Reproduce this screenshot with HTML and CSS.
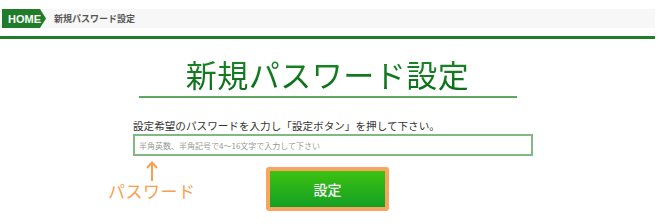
FILE: index.html
```html
<!DOCTYPE html>
<html lang="ja">
<head>
<meta charset="utf-8">
<link rel="stylesheet" href="styles.css">
</head>
<body>
<div class="page">
  <div class="crumb">
    <span class="home">HOME</span>
    <span class="crumb-text">新規パスワード設定</span>
  </div>
  <div class="rule"></div>
  <h1 class="title">新規パスワード設定</h1>
  <div class="title-line"></div>
  <div class="form">
    <p class="lead">設定希望のパスワードを入力し「設定ボタン」を押して下さい。</p>
    <div class="input">半角英数、半角記号で4～16文字で入力して下さい</div>
  </div>
  <div class="actions">
    <div class="note">
      <svg class="arrow" width="12" height="20" viewBox="0 0 12 20"><path d="M6 2 V20 M1 7 L6 1.5 L11 7" fill="none" stroke="#f7a050" stroke-width="2"/></svg>
      <span class="note-text">パスワード</span>
    </div>
    <div class="btn-wrap"><button class="btn">設定</button></div>
  </div>
</div>
</body>
</html>
```
FILE: styles.css
```css
* { box-sizing: border-box; }
html, body { margin: 0; padding: 0; background: #fff; }
body { font-family: "Noto Sans CJK JP", "Noto Sans", sans-serif; }
.page { width: 655px; padding-top: 9px; position: relative; }
.crumb {
  display: flex; align-items: center; height: 19px;
  background: #f7f7f7;
}
.home {
  height: 19px; width: 44px; margin-left: 2px;
  background: #1f7d2a; color: #fff;
  font-family: "Liberation Sans", Arial, sans-serif; font-weight: bold; font-size: 11px;
  display: flex; align-items: center; padding-left: 6px;
  clip-path: polygon(0 0, 38px 0, 44px 50%, 38px 100%, 0 100%);
}
.crumb-text { margin-left: 8px; font-size: 9px; color: #555; font-weight: bold; }
.rule { height: 3px; background: #1f7d2a; margin-top: 8px; }
.title {
  margin: 15px 0 0; text-align: center;
  font-size: 31px; line-height: 40px; font-weight: normal; letter-spacing: 0.5px;
  background: linear-gradient(#1d8a2a, #0a6a16);
  -webkit-background-clip: text; background-clip: text; color: transparent;
}
.title-line { height: 2px; width: 378px; margin: 2px 0 0 139px; background: #5fa862; }
.form { margin-left: 133px; margin-top: 21px; }
.lead { margin: 0; font-size: 10.6px; line-height: 14px; color: #333; }
.input {
  margin-top: 1px; width: 400px; height: 22px;
  border: 2px solid #80ba82;
  font-size: 8px; color: #999; padding-left: 4px;
  display: flex; align-items: center;
}
.actions { position: relative; display: flex; justify-content: center; margin-top: 11px; }
.note { position: absolute; left: 108px; top: -6px; display: flex; flex-direction: column; align-items: flex-start; }
.arrow { margin-left: 38px; display: block; }
.note-text { font-size: 17px; line-height: 20px; color: #f7a050; letter-spacing: 0.5px; }
.btn-wrap { padding: 4px; background: #f7a560; border-radius: 3px; }
.btn {
  display: block; width: 115px; height: 36px; border: none; margin: 0;
  background: linear-gradient(#3dc110, #14a024);
  color: #f0f0f0; font-family: "Noto Sans CJK JP", sans-serif; font-size: 14px; font-weight: 500;
  text-shadow: 0 0 1px #5a5;
}
```
